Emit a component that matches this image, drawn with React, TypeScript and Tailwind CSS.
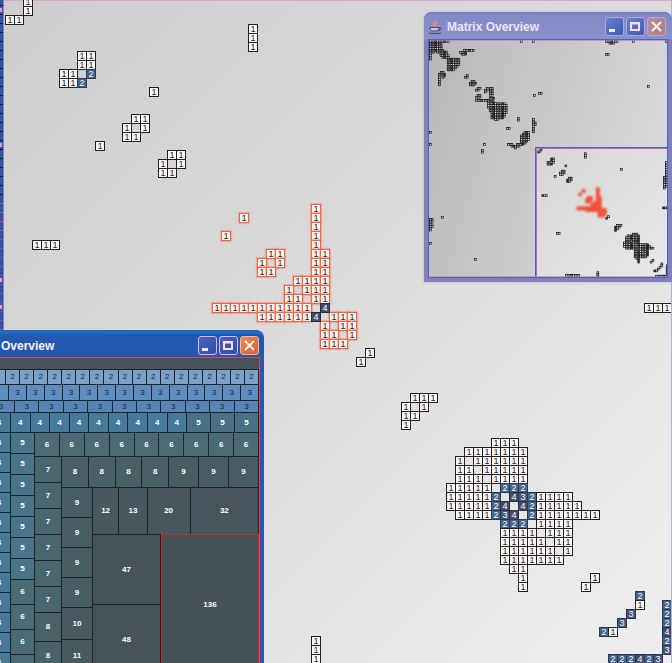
import React from "react";
import clsx from "clsx";

type Run = [row: number, col: number, values: string];
type Block = [left: number, top: number, rows: string[]];

/* Each run starts at a matrix row and column; a space leaves a position empty. */
const plainRuns: Run[] = [
  [0, 2, "1"], [1, 2, "1"], [2, 0, "11"],
  [3, 27, "1"], [4, 27, "1"], [5, 27, "1"],
  [6, 8, "11"], [7, 8, "11"], [8, 6, "11 2"], [9, 6, "112"],
  [10, 16, "1"],
  [13, 14, "11"], [14, 13, "1 1"], [15, 13, "11"],
  [16, 10, "1"],
  [17, 18, "11"], [18, 17, "1 1"], [19, 17, "11"],
  [27, 3, "111"],
  [34, 71, "111"],
  [39, 40, "1"], [40, 39, "1"],
  [44, 45, "111"], [45, 44, "1 1"], [46, 44, "11"], [47, 44, "1"],
  [49, 54, "111"],
  [50, 51, "1111111"],
  [51, 50, "1 111111"],
  [52, 50, "11 11111"],
  [53, 50, "111 1111"],
  [54, 49, "11111 222"],
  [55, 49, "111112 4321111"],
  [56, 49, "1111124 4211111"],
  [57, 50, "1111234 21111111"],
  [58, 55, "222 1111"],
  [59, 55, "1111 111"],
  [60, 55, "11111 11"],
  [61, 55, "111111 1"],
  [62, 55, "1111111"],
  [63, 56, "11"], [64, 57, "1"], [65, 57, "1"],
  [64, 65, "1"], [65, 64, "1"],
  [66, 70, "2"], [67, 70, "1"], [68, 69, "3"], [69, 68, "3"], [70, 66, "21"],
  [67, 73, "2"], [68, 73, "2"], [69, 73, "2"], [70, 73, "4"], [71, 73, "2"], [72, 73, "3"],
  [73, 67, "222423"],
  [71, 34, "1"], [72, 34, "1"], [73, 34, "1"],
];

const selectedRuns: Run[] = [
  [23, 34, "1"], [24, 34, "1"], [25, 34, "1"], [26, 34, "1"], [27, 34, "1"],
  [24, 26, "1"], [26, 24, "1"],
  [28, 29, "11"], [29, 28, "1 1"], [30, 28, "11"],
  [28, 34, "11"], [29, 34, "11"], [30, 34, "11"],
  [31, 32, "1111"],
  [32, 31, "1 111"],
  [33, 31, "11 11"],
  [34, 23, "11111111111 4"],
  [35, 28, "1111114 111"],
  [36, 35, "1 11"], [37, 35, "11 1"], [38, 35, "111"],
];

/* Blocks of the full matrix, placed in the overview's own units. */
const blocks: Block[] = [
  [0, 0, [
    "11111111111", "1111111", "1111111", "1111111", "1111111", "11111111", "111 111111",
    "1     1111", "1     11111", "1      1111", "1         1111111", "          1111111",
    "          1111111", "          1111111", "          111111", "          11111", "          1111",
  ]],
  [34, 9, ["111111"]], [30, 11, ["1111", " 111"]],
  [9, 31, [" 11", "1111", "1 11", "1 1", "1", "1", "1", "1"]],
  [35, 34, [" 1", "11"]],
  [40, 40, [" 11", "1111", "111"]],
  [46, 47, [" 11", "11"]],
  [55, 47, [" 1", "11", "1"]],
  [60, 47, ["11", "11", "11", "11", "11"]],
  [46, 54, [" 11", "111"]],
  [46, 59, ["11111111"]],
  [58, 57, [
    " 111", "111", "1111", "1111111111", "1 111111111", "11111111111", " 1111111111", " 1111111111",
    "  111111111", "  11111111", "  11111111", "  1111111", "    11",
  ]],
  [88, 77, ["1", "1"]],
  [77, 87, ["11"]],
  [103, 78, ["1", "1", "11", "11", "1", "1", "1", "1"]],
  [91, 91, ["  111", " 1111", "11111", "11111", "11111", "1111", "111"]],
  [78, 103, ["111  1111", "  11111", "    1"]],
  [104, 54, ["1"]], [109, 52, ["11"]],
  [54, 103, ["1"]], [52, 109, ["1", "1"]],
  [0, 91, ["1"]], [0, 103, ["1"]],
  [91, 0, ["1"]], [103, 0, ["1"]],
  [176, 0, ["1111111", "  111"]], [203, 0, ["1"]], [236, 0, ["1"]],
  [176, 13, ["11"]], [218, 45, ["1"]],
  [0, 178, ["11", "11", "1", "11", "11", "1", "1"]],
  [12, 176, ["1"]], [0, 202, ["1"]], [45, 218, ["1"]],
  [191, 128, ["1"]], [127, 192, ["11"]],
  [236, 121, ["1", "1", "1", "1", "1", "1", "1", "1"]],
  [234, 136, ["11", "11", "11", "11", "11", "11", "1"]],
  [136, 234, ["11111111"]],
];

const MINI = 16 / 9;

function cellsOf(runs: Run[]) {
  return runs.flatMap(([row, col, values]) =>
    [...values].map((value, i) => ({ row, col: col + i, value })).filter((c) => c.value !== " "),
  );
}

const plainCells = cellsOf(plainRuns);
const selectedCells = cellsOf(selectedRuns);

const cellTone: Record<string, string> = {
  "1": "border-[#231f20] bg-[#fdf9fa] text-[#231f20]",
  "2": "border-[#2a3a50] bg-[#44648a] text-white",
  "3": "border-[#2a3348] bg-[#44577c] text-white",
  "4": "border-[#2a2e3e] bg-[#434c68] text-white",
};

function MatrixCell({ row, col, value, selected }: { row: number; col: number; value: string; selected?: boolean }) {
  return (
    <span
      className={clsx(
        "size-2.5 border text-center text-[9px] leading-[9px]",
        selected && value === "1"
          ? "border-[#f0654a] bg-[#fff4f1] text-[#231f20] shadow-[0_0_1px_1px_rgba(244,130,105,0.45)]"
          : cellTone[value],
        selected && value !== "1" && "relative",
      )}
      style={{ gridRow: row + 1, gridColumn: col + 1 }}
    >
      {value}
    </span>
  );
}

function RowRuler() {
  return (
    <div className="w-1 shrink-0 overflow-hidden border-r border-[#8d7fc0] bg-[#2c55a8]">
      <div className="-mt-[3px]">
        {Array.from({ length: 74 }, (_, i) => (
          <div
            key={i}
            className={clsx(
              "flex h-[9px] items-center border-b",
              i < 22 ? "border-[#151a30]" : i < 26 ? "border-[#ee3a72]" : "border-[#a04490]",
            )}
          >
            {(i === 1 || i === 16 || i === 31 || i === 34) && <span className="h-1 w-0.5 bg-[#ea9ad2]" />}
          </div>
        ))}
      </div>
    </div>
  );
}

function WindowButtons({ faded }: { faded?: boolean }) {
  const base = "flex size-[19px] items-center justify-center rounded-[3px] border";
  const blue = faded
    ? "border-[#b3a6de] bg-linear-to-br from-[#6a80cc] to-[#3a5cb8]"
    : "border-[#e3b4e6] bg-linear-to-br from-[#4a64bc] to-[#2850a8]";
  return (
    <div className="flex gap-0.5">
      <button type="button" aria-label="Minimize" className={clsx(base, blue)}>
        <svg viewBox="0 0 17 17" className="size-[17px]"><path d="M3 12.500h6" stroke="#fbe6fa" strokeWidth="3" /></svg>
      </button>
      <button type="button" aria-label="Maximize" className={clsx(base, blue)}>
        <svg viewBox="0 0 17 17" className="size-[17px]">
          <path d="M3 4h10v9H3zM5 6.500v4.500h6V6.500z" fill="#fbdcf6" fillRule="evenodd" />
        </svg>
      </button>
      <button
        type="button"
        aria-label="Close"
        className={clsx(
          base,
          faded
            ? "border-[#c0a0cc] bg-linear-to-br from-[#b8909c] to-[#a87c88]"
            : "border-[#f0b8a8] bg-linear-to-br from-[#ec8a58] to-[#d8602c]",
        )}
      >
        <svg viewBox="0 0 17 17" className="size-[17px]"><path d="M4 4l9 9M13 4l-9 9" stroke="#fdf0e8" strokeWidth="2" /></svg>
      </button>
    </div>
  );
}

function CupIcon() {
  return (
    <svg viewBox="0 0 15 16" className="h-4 w-[15px]" fill="none">
      <path d="M7 1c2 2-2 3 0 6M9 3c1 1-2 2-1 4M5 4c-1 1 1 2 0 3" stroke="#e8906c" strokeWidth="1.3" />
      <path d="M2 8.500h9c0 3-1.500 3.500-4.500 3.500S2 11.500 2 8.500z" fill="#cfc6e4" stroke="#4c4468" />
      <path d="M11 9c3-1.500 3 2-1 2.500M1 14c3 1 9 1 12 0" stroke="#4c4468" />
    </svg>
  );
}

function MiniMap() {
  return (
    <svg viewBox="0 0 238 237" className="block w-full">
      <defs>
        <filter id="glow" x="-20%" y="-20%" width="140%" height="140%"><feGaussianBlur stdDeviation="0.8" /></filter>
        <linearGradient id="shade" x1="0" y1="0.2" x2="1" y2="0.5">
          <stop offset="0" stopColor="#b9b9b9" />
          <stop offset="1" stopColor="#dadada" />
        </linearGradient>
        <linearGradient id="view" x1="0" y1="0" x2="1" y2="1">
          <stop offset="0" stopColor="#d6d6d6" />
          <stop offset="1" stopColor="#e8e8e8" />
        </linearGradient>
      </defs>
      <rect width="238" height="237" fill="url(#shade)" />
      <rect x="107" y="108" width="131" height="129" fill="url(#view)" />
      <g fill="#ffffff" stroke="#1c1a1b" strokeWidth="0.75">
        {blocks.flatMap(([x, y, rows], b) =>
          rows.flatMap((line, r) =>
            [...line].map((ch, c) =>
              ch === "1" ? (
                <rect key={`${b}-${r}-${c}`} x={x + c * MINI + 0.5} y={y + r * MINI + 0.5} width={MINI} height={MINI} />
              ) : null,
            ),
          ),
        )}
        {plainCells.map((c) => (
          <rect key={`${c.row}-${c.col}`} x={107.5 + c.col * MINI} y={107.5 + c.row * 1.75} width={MINI} height={MINI} />
        ))}
      </g>
      <g fill="#f4432c" stroke="#f4432c" strokeWidth="2" opacity="0.9" filter="url(#glow)">
        {selectedCells.map((c) => (
          <rect key={`${c.row}-${c.col}`} x={107.5 + c.col * MINI} y={108 + c.row * 1.75} width={MINI} height={MINI} />
        ))}
      </g>
      <path d="M107.500 237V108.500H238" fill="none" stroke="#d95aa6" />
      <path d="M106.500 237V107.500H238" fill="none" stroke="#2a72cc" />
      <path d="M0 236.500H238M0 0.500H238" stroke="#d97ab6" strokeOpacity="0.7" />
    </svg>
  );
}

function MatrixOverview() {
  return (
    <section className="absolute top-3 right-0 w-[248px] rounded-t-lg bg-[#847fb8] px-1 pb-1 shadow-[0_0_3px_#c8a8c8]">
      <header className="-mx-1 flex h-[27px] items-center gap-1 rounded-t-lg border-t-2 border-[#6f86c6] bg-linear-to-b from-[#8089c8] to-[#8c8fc6] pr-1.5 pl-1">
        <CupIcon />
        <h2 className="flex-1 font-['Liberation_Sans',Arial,sans-serif] text-[12px] font-bold text-[#efe3f6]">Matrix Overview</h2>
        <WindowButtons faded />
      </header>
      <div className="border border-[#2a72cc]">
        <MiniMap />
      </div>
    </section>
  );
}

function Tile({ value, className }: { value: string; className: string }) {
  return (
    <div
      className={clsx(
        "flex min-w-0 items-center justify-center overflow-hidden border-r border-b border-[#1f2428] text-[8px] leading-none",
        className,
      )}
    >
      {value}
    </div>
  );
}

const tiles = (values: string, className: string) =>
  values.split(" ").map((value, i) => <Tile key={i} value={value} className={className} />);

function TreeMap() {
  return (
    <div className="flex min-h-0 flex-1 flex-col bg-[#45545a] font-bold text-white">
      <div className="h-3 shrink-0 border-b border-[#1f2428]" />
      <div className="flex h-[15px] shrink-0 font-normal text-[#1c2430]">
        <Tile value="2" className="w-[18px] bg-[#7ba1c9]" />
        {tiles("2 2 2 2 2 2 2 2 2 2 2 2 2 2 2 2 2 2", "flex-1 bg-[#7ba1c9]")}
      </div>
      <div className="flex h-4 shrink-0 font-normal text-[#1c2430]">
        <Tile value="3" className="w-[21px] bg-[#5e8ebf]" />
        {tiles("3 3 3 3 3 3 3 3 3 3 3 3 3 3", "flex-1 bg-[#5e8ebf]")}
      </div>
      <div className="flex h-3 shrink-0 font-normal text-[#1c2430]">
        <Tile value="3" className="w-[27px] bg-[#5684b6]" />
        {tiles("3 3 3 3 3 3 3 3 3 3", "flex-1 bg-[#5684b6]")}
      </div>
      <div className="flex h-5 shrink-0">
        <Tile value="4" className="w-[23px] bg-[#457a98]" />
        {tiles("4 4 4 4 4 4 4 4 4", "flex-1 bg-[#457a98]")}
        {tiles("5 5 5", "w-6 bg-[#4a7083]")}
      </div>
      <div className="flex min-h-0 flex-1 overflow-hidden">
        <div className="w-[23px] shrink-0">{tiles("4 4 4 4 4 4 4 4 4 4 4 4", "h-5 bg-[#457a98]")}</div>
        <div className="w-6 shrink-0">
          {tiles("5 5 5 5 5 5 5", "h-[21px] bg-[#48748a]")}
          {tiles("6 6 6 6", "h-[25px] bg-[#4a6a74]")}
        </div>
        <div className="flex min-w-0 flex-1 flex-col">
          <div className="flex h-6 shrink-0">{tiles("6 6 6 6 6 6 6 6 6", "flex-1 bg-[#4a6a74]")}</div>
          <div className="flex min-h-0 flex-1">
            <div className="w-[27px] shrink-0">
              {tiles("7 7 7 7 7 7", "h-[26px] bg-[#49666e]")}
              {tiles("8 8", "h-[29px] bg-[#49626a]")}
            </div>
            <div className="flex min-w-0 flex-1 flex-col">
              <div className="flex h-[31px] shrink-0">
                {tiles("8 8 8 8", "flex-1 bg-[#496067]")}
                {tiles("9 9 9", "w-[30px] bg-[#485c63]")}
              </div>
              <div className="flex min-h-0 flex-1">
                <div className="w-[31px] shrink-0">
                  {tiles("9 9 9 9", "h-[30px] bg-[#485c63]")}
                  {tiles("10 11", "h-8 bg-[#475a60]")}
                </div>
                <div className="flex min-w-0 flex-1 flex-col">
                  <div className="flex h-[47px] shrink-0">
                    <Tile value="12" className="grow-12 basis-0 bg-[#47585e]" />
                    <Tile value="13" className="grow-13 basis-0 bg-[#47585e]" />
                    <Tile value="20" className="grow-20 basis-0 bg-[#47575d]" />
                    <Tile value="32" className="grow-32 basis-0 bg-[#46565c]" />
                  </div>
                  <div className="flex min-h-0 flex-1">
                    <div className="w-[68px] shrink-0">{tiles("47 48", "h-[70px] bg-[#46545a]")}</div>
                    <div className="-mt-px flex h-[142px] flex-1 items-center justify-center border border-[#e01f26] bg-[#455258] text-[8px]">
                      136
                    </div>
                  </div>
                </div>
              </div>
            </div>
          </div>
        </div>
      </div>
    </div>
  );
}

function TreeOverview() {
  return (
    <section className="absolute top-[330px] bottom-0 -left-4 flex w-[280px] flex-col overflow-hidden rounded-tr-lg bg-[#3353a8] px-1">
      <header className="-mx-1 flex h-[27px] shrink-0 items-center rounded-tr-lg border-t-4 border-[#1f6ac0] bg-[#2259ae] pr-[5px] pl-[17px]">
        <h2 className="flex-1 font-['Liberation_Sans',Arial,sans-serif] text-[12px] font-bold text-[#fbeefa]">Overview</h2>
        <WindowButtons />
      </header>
      <div className="flex min-h-0 flex-1 flex-col border-t border-r border-[#d8484e]">
        <TreeMap />
      </div>
    </section>
  );
}

export default function App() {
  return (
    <main className="relative flex h-screen overflow-hidden bg-linear-to-br from-[#cecece] via-[#dcdcdc] to-[#f0efef] font-['Liberation_Sans',Arial,sans-serif]">
      <RowRuler />
      <div className="min-w-0 flex-1 overflow-hidden border-r border-[#a9b6d6] pl-px shadow-[inset_0_1px_0_#d9a8cc]">
        <div className="-mt-[3px] grid auto-cols-[9px] auto-rows-[9px]">
          {plainCells.map((c) => <MatrixCell key={`${c.row}-${c.col}`} {...c} />)}
          {selectedCells.map((c) => <MatrixCell key={`${c.row}-${c.col}`} {...c} selected />)}
        </div>
      </div>
      <TreeOverview />
      <MatrixOverview />
    </main>
  );
}
